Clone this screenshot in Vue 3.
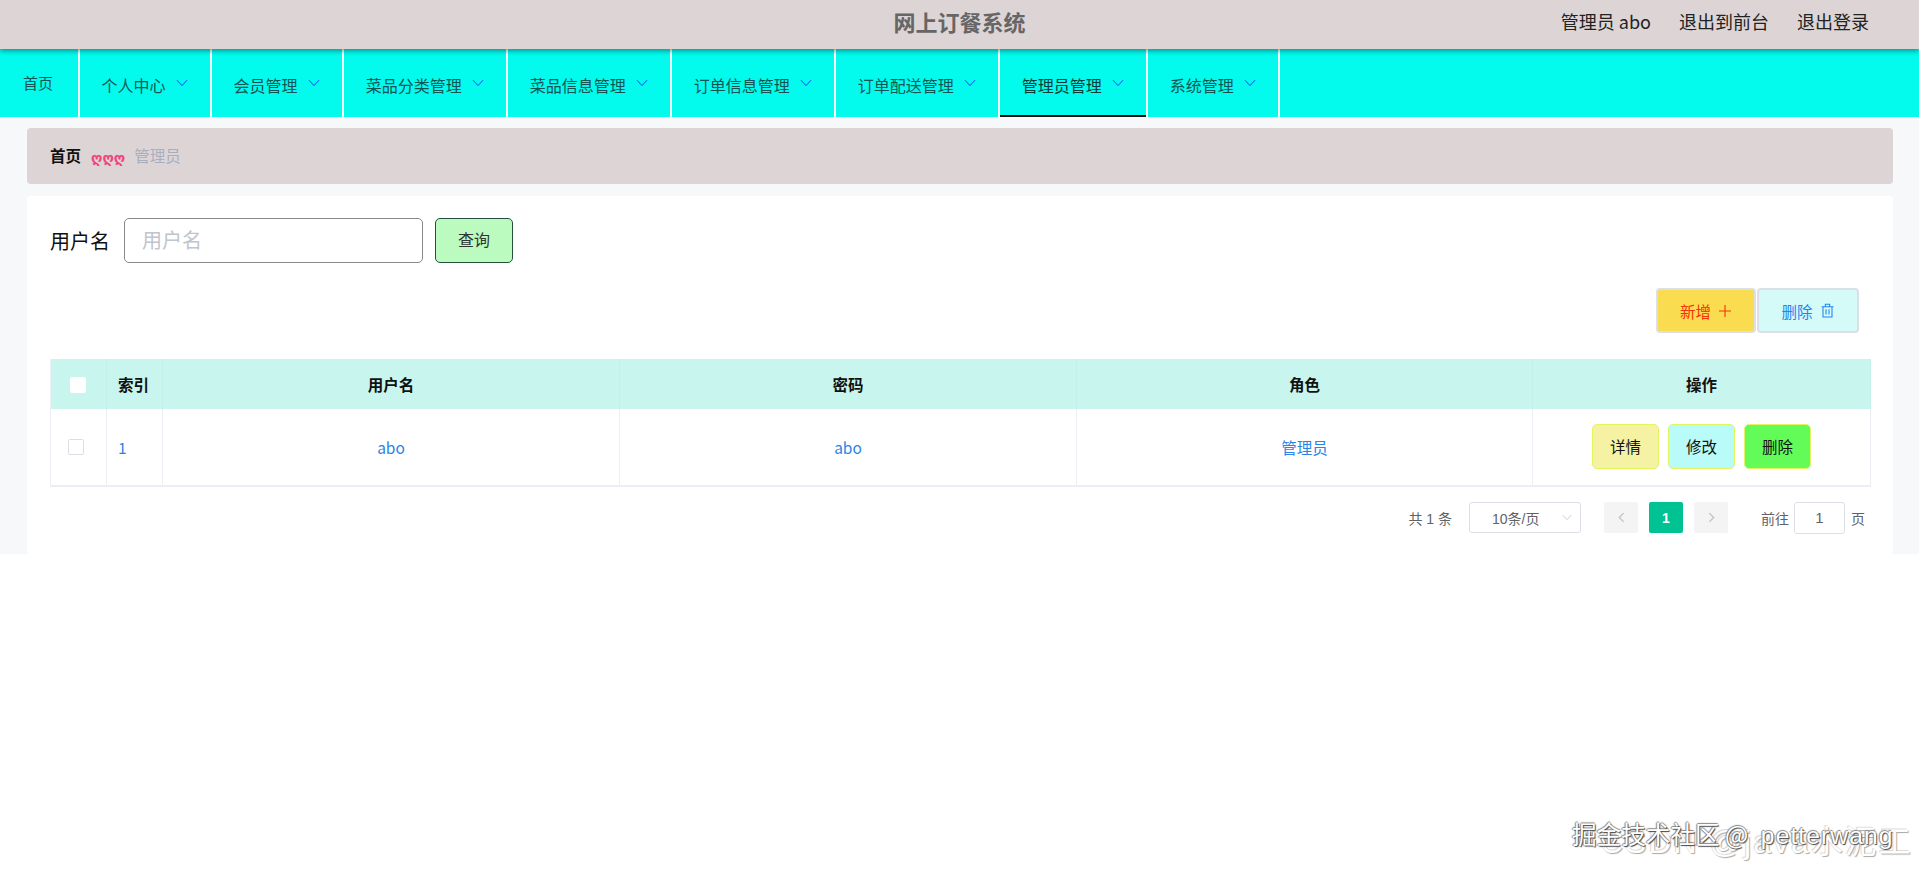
<template>
  <div class="page">
    <header class="top-bar">
      <div class="title">网上订餐系统</div>
      <div class="top-links">
        <span>管理员 abo</span>
        <span>退出到前台</span>
        <span>退出登录</span>
      </div>
    </header>

    <nav class="nav">
      <div class="nav-item home">首页</div>
      <div
        v-for="item in menus"
        :key="item"
        class="nav-item"
        :class="{ active: item === '管理员管理' }"
      >
        <span class="nav-text">{{ item }}</span>
        <svg class="nav-arrow" viewBox="0 0 12 8" width="12" height="8">
          <path d="M1 1.2 L6 6.6 L11 1.2" fill="none" stroke="#1f3dff" stroke-width="1" />
        </svg>
      </div>
    </nav>

    <main class="main">
      <div class="crumb">
        <span class="crumb-home">首页</span>
        <span class="crumb-sep">ღღღ</span>
        <span class="crumb-cur">管理员</span>
      </div>

      <section class="card">
        <div class="search-row">
          <label class="search-label">用户名</label>
          <input class="search-input" placeholder="用户名" />
          <button class="btn-query">查询</button>
        </div>

        <div class="tool-row">
          <button class="btn-tool btn-add">
            新增
            <svg viewBox="0 0 14 14" width="14" height="14">
              <path d="M7 1 V13 M1 7 H13" stroke="#f5320a" stroke-width="1.1" fill="none" />
            </svg>
          </button>
          <button class="btn-tool btn-del">
            删除
            <svg viewBox="0 0 14 14" width="15" height="15">
              <path
                d="M1.5 3.5 H12.5 M5 3.5 V1.2 H9 V3.5 M2.8 3.5 V13 H11.2 V3.5 M5.6 5.8 V10.8 M8.4 5.8 V10.8"
                stroke="#2185ef"
                stroke-width="1"
                fill="none"
              />
            </svg>
          </button>
        </div>

        <table class="grid">
          <colgroup>
            <col style="width: 56px" />
            <col style="width: 56px" />
            <col style="width: 457px" />
            <col style="width: 457px" />
            <col style="width: 456px" />
            <col style="width: 338px" />
          </colgroup>
          <thead>
            <tr>
              <th><span class="check head-check"></span></th>
              <th class="left">索引</th>
              <th>用户名</th>
              <th>密码</th>
              <th>角色</th>
              <th>操作</th>
            </tr>
          </thead>
          <tbody>
            <tr v-for="(row, i) in rows" :key="row.name">
              <td><span class="check"></span></td>
              <td class="left">{{ i + 1 }}</td>
              <td>{{ row.name }}</td>
              <td>{{ row.password }}</td>
              <td>{{ row.role }}</td>
              <td>
                <div class="ops">
                  <button class="btn-op op-view">详情</button>
                  <button class="btn-op op-edit">修改</button>
                  <button class="btn-op op-del">删除</button>
                </div>
              </td>
            </tr>
          </tbody>
        </table>

        <div class="pager">
          <span class="pager-total">共 1 条</span>
          <div class="pager-size">
            <span>10条/页</span>
            <svg viewBox="0 0 12 8" width="10" height="7">
              <path d="M1 1.2 L6 6.6 L11 1.2" fill="none" stroke="#c0c4cc" stroke-width="1" />
            </svg>
          </div>
          <div class="pager-btn">
            <svg viewBox="0 0 8 12" width="7" height="11">
              <path d="M6.5 1 L1.5 6 L6.5 11" fill="none" stroke="#c0c4cc" stroke-width="1.6" />
            </svg>
          </div>
          <div class="pager-btn current">1</div>
          <div class="pager-btn">
            <svg viewBox="0 0 8 12" width="7" height="11">
              <path d="M1.5 1 L6.5 6 L1.5 11" fill="none" stroke="#c0c4cc" stroke-width="1.6" />
            </svg>
          </div>
          <span class="pager-goto">前往</span>
          <div class="pager-input">1</div>
          <span class="pager-unit">页</span>
        </div>
      </section>
    </main>

    <div class="mark mark-csdn">CSDN @java水泥工</div>
    <div class="mark mark-juejin">掘金技术社区 @ <span class="mark-name">petterwang</span></div>
  </div>
</template>

<script setup>
const menus = [
  '个人中心',
  '会员管理',
  '菜品分类管理',
  '菜品信息管理',
  '订单信息管理',
  '订单配送管理',
  '管理员管理',
  '系统管理'
]

const rows = [{ name: 'abo', password: 'abo', role: '管理员' }]
</script>

<style>
html,
body {
  margin: 0;
  background: #fff;
}
</style>

<style scoped>
.page {
  position: relative;
  min-height: 871px;
  overflow: hidden;
  font-family: "Noto Sans CJK SC", "Noto Sans", sans-serif;
  color: #111;
}

.top-bar {
  position: relative;
  z-index: 2;
  height: 49px;
  background: #ddd5d5;
  box-shadow: 0 2px 5px rgba(0, 0, 0, 0.4);
  display: flex;
  align-items: center;
  justify-content: center;
}

.title {
  font-size: 22px;
  font-weight: 700;
  color: #666;
  padding-bottom: 7px;
}

/* 右上角链接 */
.top-links {
  position: absolute;
  right: 50px;
  top: 9px;
  display: flex;
  gap: 28px;
  font-size: 18px;
  line-height: 25px;
  color: #222;
}

.nav {
  height: 68px;
  background: #02fbed;
  display: flex;
}

.nav-item {
  display: flex;
  align-items: center;
  gap: 10px;
  padding: 4px 22px 0;
  border-right: 2px solid #f4fbfb;
  font-size: 16px;
  color: #155;
  box-sizing: border-box;
}

.nav-item.home {
  padding: 0 0 0 23px;
  width: 79.6px;
  padding-bottom: 2px;
  font-size: 15px;
}

.nav-item.active {
  box-shadow: inset 0 -2px 0 #111;
  color: #0a3a3a;
}

.nav-arrow {
  margin-top: -4px;
}

.main {
  background: #f7f8fa;
  padding: 11px 26px 0 27px;
}

.crumb {
  height: 56px;
  box-sizing: border-box;
  border-radius: 4px;
  background: #ddd5d5;
  display: flex;
  align-items: center;
  padding: 0 0 2px 23px;
  font-size: 15.5px;
}

.crumb-home {
  font-weight: 700;
  color: #111;
}

.crumb-sep {
  margin: 6px 9px 0 10px;
  font-family: "DejaVu Sans", sans-serif;
  font-weight: 700;
  font-size: 14px;
  color: #f0437c;
}

.crumb-cur {
  color: #a9aebf;
}

.card {
  margin-top: 12px;
  background: #fff;
  border-radius: 4px;
  padding: 22px 23px 20px;
}

.search-row {
  display: flex;
  align-items: center;
  height: 45px;
}

.search-label {
  width: 74px;
  font-size: 20px;
  color: #111;
  padding-bottom: 1px;
}

.search-input {
  width: 299px;
  height: 45px;
  box-sizing: border-box;
  border: 1px solid #888;
  border-radius: 5px;
  padding: 0 17px 2px;
  font-size: 20px;
  font-family: inherit;
  outline: none;
}

.search-input::placeholder {
  color: #c0c4cc;
}

.btn-query {
  margin-left: 12px;
  width: 78px;
  height: 45px;
  background: #bcfbc0;
  border: 1px solid #24503a;
  border-radius: 5px;
  font-size: 16px;
  font-family: inherit;
  color: #333;
  padding: 0 0 3px;
}

.tool-row {
  display: flex;
  justify-content: flex-end;
  padding-right: 11px;
  margin-top: 25px;
}

.btn-tool {
  height: 45px;
  box-sizing: border-box;
  border: 2px solid #dcdfe6;
  border-radius: 4px;
  font-size: 15.5px;
  font-family: inherit;
  display: flex;
  align-items: center;
  justify-content: center;
  gap: 7px;
  padding: 0;
}

.btn-add {
  width: 100px;
  background: #fadc50;
  color: #f5320a;
}

.btn-del {
  width: 102px;
  margin-left: 1px;
  background: #d5fbf9;
  color: #2185ef;
}

.grid {
  margin-top: 26px;
  width: 1820px;
  table-layout: fixed;
  border-collapse: collapse;
  border-left: 1px solid #ebeef5;
  border-right: 1px solid #ebeef5;
  border-bottom: 2px solid #ebeef5;
}

.grid th {
  height: 50px;
  padding: 0;
  background: #c8f6ee;
  font-size: 15.5px;
  font-weight: 700;
  color: #111;
  border-right: 1px solid #c4f0e9;
  text-align: center;
}

.grid td {
  height: 76px;
  padding: 0;
  font-size: 15.5px;
  color: #2a85e6;
  border-right: 1px solid #ebeef5;
  text-align: center;
}

.grid .left {
  text-align: left;
  padding-left: 11px;
}

.check {
  display: block;
  width: 16px;
  height: 16px;
  margin: 0 auto 0 17px;
  box-sizing: border-box;
  border: 1px solid #dcdfe6;
  border-radius: 2px;
  background: #fff;
}

.head-check {
  margin: 2px auto 0 19px;
  border-color: #fff;
}

.ops {
  display: flex;
  justify-content: center;
  gap: 9px;
  margin-top: -2px;
}

.btn-op {
  width: 67px;
  height: 45px;
  box-sizing: border-box;
  border: 1px solid #e4f45e;
  border-radius: 5px;
  font-size: 15.5px;
  font-family: inherit;
  color: #111;
  padding: 0;
}

.op-view {
  background: #f5f3a3;
}

.op-edit {
  background: #b9fbf8;
}

.op-del {
  background: #62fb58;
}

.pager {
  display: flex;
  justify-content: flex-end;
  align-items: center;
  margin-top: 14px;
  padding-right: 5px;
  height: 33px;
  font-family: "Liberation Sans", "Noto Sans CJK SC", sans-serif;
  font-size: 14px;
  color: #606266;
}

.pager-size {
  margin-left: 17px;
  width: 112px;
  height: 31px;
  box-sizing: border-box;
  border: 1px solid #dcdfe6;
  border-radius: 3px;
  display: flex;
  align-items: center;
  justify-content: space-between;
  padding: 0 8px 0 22px;
}

.pager-btn {
  width: 34px;
  height: 31px;
  margin-left: 11px;
  border-radius: 2px;
  background: #f4f4f5;
  display: flex;
  align-items: center;
  justify-content: center;
}

.pager-size + .pager-btn {
  margin-left: 23px;
}

.pager-btn.current {
  background: #00c292;
  color: #fff;
  font-weight: 700;
}

.pager-goto {
  margin-left: 33px;
}

.pager-input {
  width: 51px;
  height: 32px;
  margin-left: 5px;
  box-sizing: border-box;
  border: 1px solid #dcdfe6;
  border-radius: 3px;
  display: flex;
  align-items: center;
  justify-content: center;
  font-size: 15px;
}

.pager-unit {
  margin-left: 6px;
}

/* 截图上的水印 */
.mark {
  position: absolute;
  white-space: nowrap;
  pointer-events: none;
}

.mark-csdn {
  top: 824px;
  left: 1600px;
  font-family: "Liberation Sans", "Noto Sans CJK SC", sans-serif;
  font-size: 32px;
  line-height: 36px;
  letter-spacing: 2px;
  color: #fff;
  text-shadow: 1px 1px 1px #a8a8a8, -1px -1px 0 #dcdcdc;
}

.mark-juejin {
  top: 816px;
  left: 1572px;
  font-size: 24.6px;
  line-height: 34px;
  color: #fff;
  text-shadow: 1px 1px 1px #444, -1px 0 1px #888, 0 -1px 1px #888;
}

.mark-name {
  margin-left: 7px;
  font-family: "Liberation Sans", sans-serif;
  letter-spacing: 1.1px;
}
</style>
